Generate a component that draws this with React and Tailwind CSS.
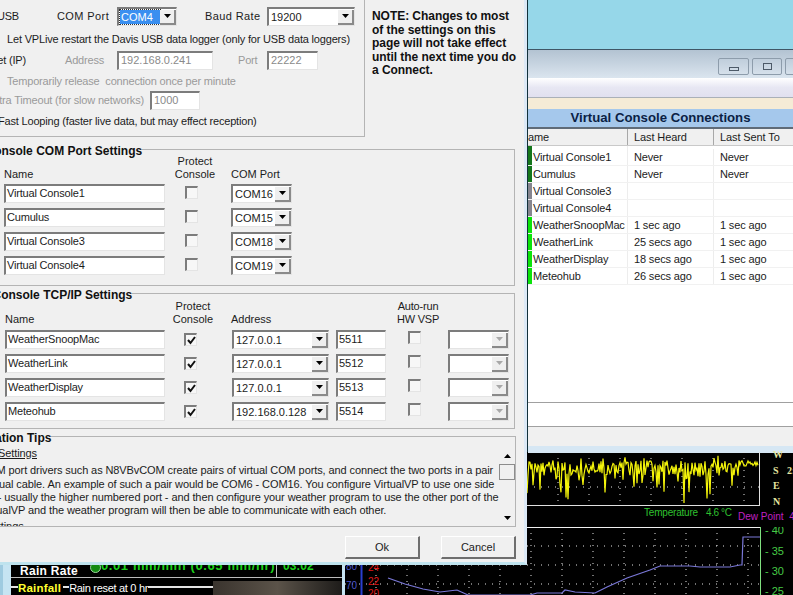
import React from 'react';

const comRows = [
  ['Virtual Console1', 'COM16'],
  ['Cumulus', 'COM15'],
  ['Virtual Console3', 'COM18'],
  ['Virtual Console4', 'COM19'],
];

const tcpRows = [
  ['WeatherSnoopMac', '127.0.0.1', '5511'],
  ['WeatherLink', '127.0.0.1', '5512'],
  ['WeatherDisplay', '127.0.0.1', '5513'],
  ['Meteohub', '192.168.0.128', '5514'],
];

const connections = [
  ['Virtual Console1', 'Never', 'Never', 'bg-[#14761c]'],
  ['Cumulus', 'Never', 'Never', 'bg-[#14761c]'],
  ['Virtual Console3', '', '', 'bg-[#85858f]'],
  ['Virtual Console4', '', '', 'bg-[#85858f]'],
  ['WeatherSnoopMac', '1 sec ago', '1 sec ago', 'bg-[#0be30b]'],
  ['WeatherLink', '25 secs ago', '1 sec ago', 'bg-[#0be30b]'],
  ['WeatherDisplay', '18 secs ago', '1 sec ago', 'bg-[#0be30b]'],
  ['Meteohub', '26 secs ago', '1 sec ago', 'bg-[#0be30b]'],
];

const sunken = 'border-t-2 border-l-2 border-t-[#7c7c7c] border-l-[#7c7c7c] border-r border-b border-r-[#e4e4e4] border-b-[#e4e4e4]';

const Arrow = ({ up, color = '#000' }) => (
  <svg width="7" height="4" viewBox="0 0 7 4">
    <path d={up ? 'M0 4 L3.5 0 L7 4 Z' : 'M0 0 L7 0 L3.5 4 Z'} fill={color} />
  </svg>
);

const Field = ({ value, className, muted }) => (
  <div className={`${sunken} ${className} h-[19px] shrink-0 bg-white leading-[15px] whitespace-nowrap ${muted ? 'text-[#8a8a8a]' : ''}`}>
    {value}
  </div>
);

const Combo = ({ value, className, disabled, selected }) => (
  <div className={`${sunken} ${className} h-[19px] shrink-0 bg-white flex items-center justify-between whitespace-nowrap tracking-normal`}>
    {selected ? (
      <span className="ml-[1px] flex-1 bg-[#3a8ff0] text-white leading-[14px] pl-[1px] outline-1 outline-dotted outline-[#333]">{value}</span>
    ) : (
      <span className="pl-[2px]">{value}</span>
    )}
    <span className="w-[16px] h-[15px] shrink-0 bg-[#efefef] border-r-2 border-b-2 border-r-[#8a8a8a] border-b-[#8a8a8a] flex items-center justify-center">
      <Arrow color={disabled ? '#a8a8a8' : '#000'} />
    </span>
  </div>
);

const Check = ({ checked, className = '' }) => (
  <div className={`${sunken} ${className} w-[13px] h-[13px] bg-[#f7f7f7] flex items-center justify-center`}>
    {checked && (
      <svg width="9" height="9" viewBox="0 0 9 9">
        <path d="M1 4 L3.5 7 L8 1" fill="none" stroke="#111" strokeWidth="2" />
      </svg>
    )}
  </div>
);

const Group = ({ title, legendClass, className, children }) => (
  <fieldset className={`border border-[#b4b4b4] ${className}`}>
    <legend className={`h-[14px] font-bold text-[12px] text-[#111] tracking-normal whitespace-nowrap ${legendClass}`}>
      <span className="block pt-[2px] leading-[14px]">{title}</span>
    </legend>
    {children}
  </fieldset>
);

// yellow trace: a noisy band with long spikes, settling down at the right end
const wave = () => {
  let seed = 37;
  const rnd = () => {
    seed = (seed * 16807) % 2147483647;
    return seed / 2147483647;
  };
  const pts = [];
  for (let x = 0; x < 232; x += 1) {
    const wide = x < 50 || (x > 148 && x < 195);
    let y = 16 + (rnd() - 0.5) * 15;
    const r = rnd();
    if (r > 0.78) y += rnd() * (wide ? 34 : 20);
    if (r < 0.12) y -= rnd() * 13;
    if (x > 212) y = 11 + (rnd() - 0.5) * 6;
    pts.push(`${x},${Math.max(1, Math.min(51, y)).toFixed(1)}`);
  }
  return pts.join(' ');
};

const Dots = ({ w, h, stepX, stepY }) => {
  const lines = [];
  for (let y = stepY; y < h; y += stepY) lines.push(<line key={`h${y}`} x1="0" y1={y} x2={w} y2={y} stroke="#e4e4e4" strokeDasharray="1 6" />);
  for (let x = stepX; x < w; x += stepX) lines.push(<line key={`v${x}`} x1={x} y1="0" x2={x} y2={h} stroke="#e4e4e4" strokeDasharray="1 5" />);
  return lines;
};

const ConnectionsWindow = () => (
  <div className="h-[452px] ml-[527px] flex flex-col border-l border-l-[#12303a] font-['Liberation_Sans'] text-[11px] text-[#1c1c1c]">
    <div className="h-[49px] shrink-0 bg-[#96d7e9]" />
    <div className="h-[29px] shrink-0 border-t border-t-[#3f5666] bg-gradient-to-b from-[#b3c3d2] to-[#dbe5ef] flex items-center justify-end gap-[3px] pt-[5px] -mr-[22px]">
      <div className="w-[31px] h-[17px] rounded-[2px] border border-[#8d9cab] flex items-end justify-center pb-[3px]">
        <div className="w-[10px] h-[4px] border border-[#4d5a68]" />
      </div>
      <div className="w-[30px] h-[17px] rounded-[2px] border border-[#8d9cab] flex items-center justify-center">
        <div className="w-[9px] h-[7px] border border-[#4d5a68]" />
      </div>
      <div className="w-[30px] h-[17px] rounded-[2px] border border-[#8d9cab]" />
    </div>
    <div className="h-[20px] shrink-0 bg-gradient-to-b from-[#ffffff] via-[#e7e7f3] to-[#e1e0ef] border-b border-b-[#aab0b8]" />
    <div className="h-[11px] shrink-0 bg-[#f5ebd6]" />
    <div className="h-[20px] shrink-0 bg-[#a5c8ec] border-b-2 border-b-[#5f6b78] text-center font-bold text-[13.2px] leading-[18px] text-[#0b1f45] whitespace-nowrap">
      Virtual Console Connections
    </div>
    <div className="h-[17px] shrink-0 grid grid-cols-[100px_86px_1fr] bg-[#f0f0f0] border-b border-b-[#c9c9c9] leading-[17px] overflow-hidden tracking-[-0.1px]">
      <div className="border-r border-r-[#a8a8a8]">ame</div>
      <div className="border-r border-r-[#a8a8a8] pl-[6px]">Last Heard</div>
      <div className="pl-[6px] whitespace-nowrap">Last Sent To</div>
    </div>
    <div className="h-[256px] shrink-0 bg-white tracking-[-0.15px]">
      {connections.map(([name, heard, sent, strip]) => (
        <div key={name} className="h-[17px] first:h-[20px] grid grid-cols-[100px_86px_1fr] border-b border-b-[#f1f1f1] leading-[16px] whitespace-nowrap">
          <div className="flex items-end border-r border-r-[#ededed] overflow-hidden">
            <span className={`${strip} w-[4px] self-stretch shrink-0 mr-[1px]`} />
            {name}
          </div>
          <div className="self-end border-r border-r-[#ededed] pl-[6px] h-[16px]">{heard}</div>
          <div className="self-end pl-[6px] h-[16px]">{sent}</div>
        </div>
      ))}
    </div>
    <div className="h-[24px] shrink-0 bg-white border-t border-t-[#a0a0a0]" />
    <div className="h-[20px] shrink-0 bg-[#f0f0f0] border-t border-t-[#a0a0a0]" />
    <div className="h-[7px] shrink-0 bg-[#d6e7f4]" />
  </div>
);

const RainPanel = () => (
  <div className="pt-[113px] w-[345px] shrink-0">
    <div className="h-[30px] flex bg-[#c6e4f2] border-l-[3px] border-l-[#9fcbe0]">
      <div className="ml-[8px] w-[331px] h-[30px] bg-black text-white font-['Liberation_Sans'] overflow-hidden">
        <div className="h-[13px] flex border-b border-b-[#bcbcbc] relative">
          <div className="w-[266px] h-[13px] border-r border-r-[#bcbcbc] pl-[9px]">
            <span className="block font-bold text-[12px] leading-[12px] tracking-[0.3px] whitespace-nowrap">Rain Rate</span>
          </div>
          <span className="absolute left-[79px] -top-[3px] w-[11px] h-[11px] rounded-full bg-[#128a12] border border-[#9fd79f]" />
          <span className="absolute left-[90px] -top-[6px] text-[13px] font-bold text-[#1bd11b] tracking-[0.6px] whitespace-nowrap leading-[14px]">0.01 mm/min (0.65 mm/hr)</span>
          <span className="absolute left-[272px] -top-[6px] text-[12px] font-bold text-[#1bd11b] leading-[14px]">03:02</span>
        </div>
        <div className="h-[17px] flex items-start">
          <div className="h-[2px] w-[7px] mt-[8px] bg-[#e4e4e4]" />
          <span className="font-bold text-[11.5px] leading-[14px] mt-[3px] text-[#ffff30] pr-[2px] tracking-[0.2px]">Rainfall</span>
          <div className="h-[2px] w-[6px] mt-[8px] bg-[#e4e4e4]" />
          <span className="text-[11px] leading-[14px] mt-[3px] whitespace-nowrap tracking-[-0.3px]">Rain reset at 0 hr</span>
          <div className="h-[2px] w-[65px] mt-[8px] bg-[#e4e4e4]" />
          <div className="flex-1 h-[14px] mt-[3px] bg-gradient-to-r from-[#3a342e] via-[#5b5349] to-[#1e1c1a]" />
        </div>
      </div>
    </div>
  </div>
);

const Charts = () => (
  <div className="flex-1 flex flex-col font-['Liberation_Sans']">
    <div className="ml-[182px] h-[53px] flex">
      <svg width="233" height="53" viewBox="0 0 233 53" className="shrink-0">
        <Dots w={233} h={53} stepX={31} stepY={35} />
        <polyline points={wave()} fill="none" stroke="#f4f40a" strokeWidth="1.2" />
        <line x1="232.5" y1="0" x2="232.5" y2="53" stroke="#e0e0e0" />
      </svg>
      <div className="ml-[13px] -mt-[5px] flex flex-col text-[10px] font-bold font-['Liberation_Serif'] text-[#e6e6a0] leading-[15.5px] whitespace-nowrap">
        <span>W</span>
        <span>S <span className="ml-[6px]">2:</span></span>
        <span>E</span>
        <span>N</span>
      </div>
    </div>
    <div className="h-[22px] ml-[182px] relative">
      <div className="w-[233px] h-[1px] bg-[#e0e0e0]" />
      <span className="absolute left-[117px] top-[1px] text-[10px] text-[#2fc02f] whitespace-nowrap leading-[14px] tracking-[-0.2px]">Temperature</span>
      <span className="absolute left-[179px] top-[1px] text-[10px] text-[#2fc02f] whitespace-nowrap leading-[14px] tracking-[-0.4px]">4.6 °C</span>
      <span className="absolute left-[211px] top-[5px] text-[10px] text-[#c020c0] whitespace-nowrap leading-[14px]">Dew Point&nbsp; 4.</span>
    </div>
    <svg width="448" height="68" viewBox="0 0 448 68" className="shrink-0">
      <Dots w={415} h={68} stepX={31} stepY={19} />
      <line x1="0" y1="0.5" x2="415" y2="0.5" stroke="#f0f0f0" />
      <line x1="415.5" y1="0" x2="415.5" y2="68" stroke="#7fe07f" />
      <line x1="16.5" y1="30" x2="16.5" y2="68" stroke="#2a3fd0" strokeWidth="2" />
      <polyline
        points="43,51 60,57 78,62 95,65 112,63 123,68 185,68 192,66 217,66 220,63 230,65 250,66 262,60 282,51 305,43 315,39 345,39 355,40 385,40 395,38 397,38 398,10 415,10"
        fill="none"
        stroke="#7a78d8"
        strokeWidth="1.2"
      />
      <g fontSize="10" fontFamily="Liberation Sans">
        <text x="1" y="43" fill="#4a55c8">80</text>
        <text x="1" y="62" fill="#4a55c8">70</text>
        <text x="23" y="44" fill="#e01818">24</text>
        <text x="23" y="58" fill="#e01818">22</text>
        <text x="23" y="70" fill="#e01818">20</text>
        <text x="420" y="7" fontSize="11" fill="#46c946">- 40</text>
        <text x="420" y="28" fontSize="11" fill="#46c946">- 35</text>
        <text x="420" y="48" fontSize="11" fill="#46c946">- 30</text>
        <text x="420" y="68" fontSize="11" fill="#46c946">- 25</text>
      </g>
    </svg>
  </div>
);

const SettingsDialog = () => (
  <div className="absolute left-0 top-0 w-[527px] h-[565px] bg-[#f0f0f0] border-r-[3px] border-b-[3px] border-r-[#dce9f6] border-b-[#bfe3ee] font-['Liberation_Sans'] text-[11px] text-[#1c1c1c] tracking-[-0.18px] overflow-hidden">
    <div className="-ml-[10px] w-[534px]">
      <div className="flex h-[137px]">
        <div className="w-[375px] h-[137px] shrink-0 border-r border-b border-[#b4b4b4] pt-[7px] whitespace-nowrap">
          <div className="flex items-center h-[19px]">
            <span className="w-[29px] flex justify-end shrink-0">Serial/USB</span>
            <span className="ml-[38px] w-[60px] shrink-0 tracking-[0.4px]">COM Port</span>
            <Combo value="COM4" className="w-[60px]" selected />
            <span className="ml-[28px] w-[62px] shrink-0 tracking-[0.4px]">Baud Rate</span>
            <Combo value="19200" className="w-[88px]" />
          </div>
          <div className="h-[14px] mt-[6px] pl-[17px] leading-[14px]">Let VPLive restart the Davis USB data logger (only for USB data loggers)</div>
          <div className="flex items-center h-[19px] mt-[5px]">
            <span className="w-[36px] flex justify-end shrink-0">Ethernet (IP)</span>
            <span className="ml-[39px] w-[52px] shrink-0 text-[#9a9a9a]">Address</span>
            <Field value="192.168.0.241" className="w-[96px] pl-[2px] tracking-normal" muted />
            <span className="ml-[25px] w-[29px] shrink-0 text-[#9a9a9a]">Port</span>
            <Field value="22222" className="w-[51px] pl-[2px] tracking-normal" muted />
          </div>
          <div className="h-[14px] mt-[4px] pl-[17px] leading-[14px] text-[#9a9a9a]">Temporarily release&nbsp; connection once per minute</div>
          <div className="flex items-center h-[19px] mt-[3px]">
            <span className="w-[154px] flex justify-end shrink-0 text-[#9a9a9a]">Extra Timeout (for slow networks)</span>
            <Field value="1000" className="w-[50px] ml-[6px] pl-[2px] tracking-normal" muted />
          </div>
          <div className="h-[14px] mt-[4px]">
            <span className="leading-[14px] block ml-[8px]">Fast Looping (faster live data, but may effect reception)</span>
          </div>
        </div>
        <div className="ml-[7px] pt-[10px] font-bold text-[12px] leading-[13.6px] text-[#111] tracking-[-0.05px] whitespace-nowrap">
          NOTE: Changes to most<br />of the settings on this<br />page will not take effect<br />until the next time you do<br />a Connect.
        </div>
      </div>

      <Group title="Virtual Console COM Port Settings" legendClass="-ml-[59px]" className="mt-[5px] w-[525px] h-[144px] pl-[13px]">
        <div className="grid grid-cols-[161px_60px_80px] items-end leading-[13px] -mt-[1px] tracking-normal">
          <span>Name</span>
          <span className="text-center">Protect<br />Console</span>
          <span className="ml-[6px]">COM Port</span>
        </div>
        <div className="mt-[3px] flex flex-col gap-[5px]">
          {comRows.map(([name, port]) => (
            <div key={name} className="flex items-center">
              <Field value={name} className="w-[161px] pl-[1px]" />
              <Check className="ml-[20px] -mt-[2px]" />
              <Combo value={port} className="w-[61px] ml-[33px]" />
            </div>
          ))}
        </div>
      </Group>

      <Group title="Virtual Console TCP/IP Settings" legendClass="-ml-[53px]" className="mt-0 w-[525px] h-[143px] pl-[14px]">
        <div className="flex items-end leading-[13px] tracking-normal">
          <span className="w-[158px]">Name</span>
          <span className="w-[60px] text-center">Protect<br />Console</span>
          <span className="ml-[8px] w-[157px]">Address</span>
          <span className="w-[60px] text-center tracking-[-0.2px]">Auto-run<br />HW VSP</span>
        </div>
        <div className="mt-[4px] flex flex-col gap-[5px]">
          {tcpRows.map(([name, addr, port]) => (
            <div key={name} className="flex items-center">
              <Field value={name} className="w-[160px] pl-[1px]" />
              <Check checked className="ml-[19px]" />
              <Combo value={addr} className="w-[97px] ml-[35px]" />
              <Field value={port} className="w-[50px] ml-[7px] pl-[1px] tracking-normal" />
              <Check className="ml-[22px] -mt-[5px]" />
              <Combo value="" className="w-[61px] ml-[27px]" disabled />
            </div>
          ))}
        </div>
      </Group>

      <Group title="Configuration Tips" legendClass="-ml-[46px]" className="w-[525px] h-[98px] flex">
        <div className="flex h-[83px]">
          <div className="w-[508px] overflow-hidden whitespace-nowrap leading-[13.3px] pt-[4px] tracking-[-0.1px]">
            <div className="-ml-[44px] underline">COM Port Settings</div>
            <div className="mt-[4px] -ml-[44px]">
              <div>Virtual COM port drivers such as N8VBvCOM create pairs of virtual COM ports, and connect the two ports in a pair</div>
              <div>using a virtual cable. An example of such a pair would be COM6 - COM16. You configure VirtualVP to use one side</div>
              <div>of the pair - usually the higher numbered port - and then configure your weather program to use the other port of the</div>
              <div>port to VirtualVP and the weather program will then be able to communicate with each other.</div>
            </div>
            <div className="mt-[3px] -ml-[44px]">TCP/IP Settings</div>
          </div>
          <div className="w-[16px] h-[73px] mt-[8px] flex flex-col items-center">
            <span className="h-[10px] flex items-center"><Arrow up /></span>
            <span className="w-[16px] h-[16px] mt-[3px] border border-[#8c8c8c]" />
            <span className="h-[12px] mt-auto flex items-center"><Arrow /></span>
          </div>
        </div>
      </Group>

      <div className="flex justify-end gap-[21px] pt-[9px] pr-[8px] tracking-normal">
        {['Ok', 'Cancel'].map((label) => (
          <button key={label} className="w-[75px] h-[23px] bg-[#f0f0f0] border-r-2 border-b-2 border-t border-l border-t-white border-l-white border-r-[#6e6e6e] border-b-[#6e6e6e] leading-[18px]">
            {label}
          </button>
        ))}
      </div>
    </div>
  </div>
);

export default function App() {
  return (
    <div className="relative w-[793px] h-[595px] overflow-hidden bg-black">
      <ConnectionsWindow />
      <div className="h-[143px] flex">
        <RainPanel />
        <Charts />
      </div>
      <SettingsDialog />
    </div>
  );
}
